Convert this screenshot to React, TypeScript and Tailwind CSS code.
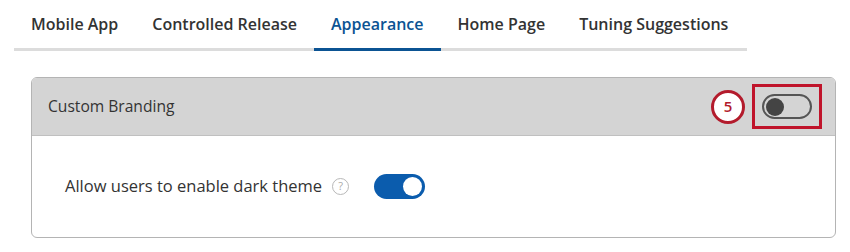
import React from "react";

const tabs = ["Mobile App", "Controlled Release", "Appearance", "Home Page", "Tuning Suggestions"];

export default function App() {
  return (
    <div className="h-[252px] w-[850px] bg-white pt-[4px] font-['Open_Sans',sans-serif] text-[#333]">
      <div className="ml-[14px] flex w-[733px] border-b-[3px] border-[#dcdcdc]">
        {tabs.map((t, i) => (
          <div
            key={t}
            className={
              "-mb-[3px] flex h-[47px] items-start px-[17px] pt-[9px] text-[16px] leading-[22px] font-semibold " +
              (i === 2 ? "border-b-[3px] border-[#0b5393] text-[#0b5393]" : "border-b-[3px] border-transparent text-[#333]")
            }
          >
            {t}
          </div>
        ))}
      </div>

      <div className="ml-[31px] mt-[26px] w-[805px] overflow-hidden rounded-[6px] border border-[#b4b4b4]">
        <div className="flex h-[58px] items-center justify-between border-b border-[#c0c0c0] bg-[#d4d4d4] pl-[16px] pr-[13px]">
          <span className="text-[15.6px] text-[#333]">Custom Branding</span>
          <div className="flex items-center gap-[7px]">
            <div className="flex h-[34px] w-[34px] items-center justify-center rounded-full border-[3px] border-[#b31b2c] bg-white text-[15px] font-semibold text-[#b31b2c]">
              5
            </div>
            <div className="flex h-[45px] w-[70px] items-center justify-center border-[3px] border-[#c0142b]">
              <div className="flex h-[25px] w-[50px] items-center rounded-full border-2 border-[#555] px-[2px]">
                <div className="h-[18px] w-[18px] rounded-full bg-[#444]" />
              </div>
            </div>
          </div>
        </div>
        <div className="flex h-[101px] items-center pl-[33px]">
          <span className="text-[16.5px] text-[#333]">Allow users to enable dark theme</span>
          <div className="ml-[10px] flex h-[17px] w-[17px] items-center justify-center rounded-full border border-[#b8b8b8] text-[11px] text-[#aaa]">
            ?
          </div>
          <div className="ml-[25px] flex h-[25px] w-[51px] items-center justify-end rounded-full bg-[#0b5cad] px-[3px]">
            <div className="h-[19px] w-[19px] rounded-full bg-white" />
          </div>
        </div>
      </div>
    </div>
  );
}
